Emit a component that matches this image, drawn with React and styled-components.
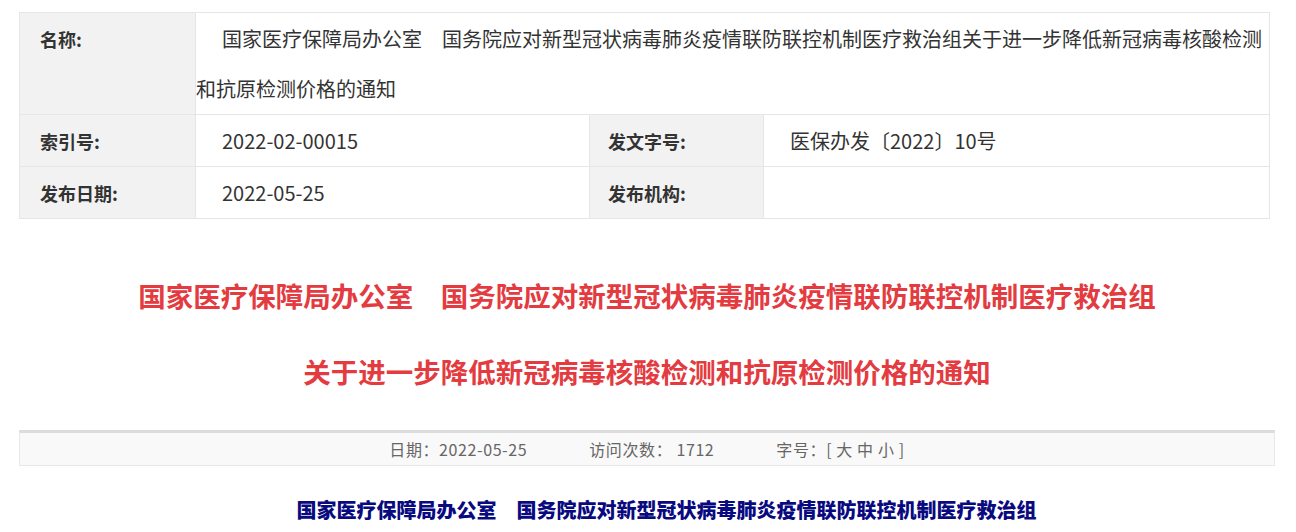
import { createGlobalStyle, styled } from "styled-components";

const GlobalStyle = createGlobalStyle`
    body {
        margin: 0;
        background: #fff;
        font-family: "Noto Sans CJK SC", "Microsoft YaHei", sans-serif;
        color: #333;
    }
`;

const meta = [
    { label: "索引号:", value: "2022-02-00015", label2: "发文字号:", value2: "医保办发〔2022〕10号" },
    { label: "发布日期:", value: "2022-05-25", label2: "发布机构:", value2: "" },
];

const App = () => {
    return (
        <Page>
            <GlobalStyle />

            <InfoTable>
                <colgroup>
                    <col style={{ width: 176 }} />
                    <col style={{ width: 394 }} />
                    <col style={{ width: 174 }} />
                    <col style={{ width: 506 }} />
                </colgroup>
                <tbody>
                    <tr>
                        <LabelCell>名称:</LabelCell>
                        <ValueCell colSpan={3}>
                            国家医疗保障局办公室　国务院应对新型冠状病毒肺炎疫情联防联控机制医疗救治组关于进一步降低新冠病毒核酸检测和抗原检测价格的通知
                        </ValueCell>
                    </tr>
                    {meta.map((row) => (
                        <tr key={row.label}>
                            <LabelCell>{row.label}</LabelCell>
                            <ValueCell>{row.value}</ValueCell>
                            <LabelCell $narrow>{row.label2}</LabelCell>
                            <ValueCell>{row.value2}</ValueCell>
                        </tr>
                    ))}
                </tbody>
            </InfoTable>

            <Title>
                <TitleLine>国家医疗保障局办公室　国务院应对新型冠状病毒肺炎疫情联防联控机制医疗救治组</TitleLine>
                <TitleLine>关于进一步降低新冠病毒核酸检测和抗原检测价格的通知</TitleLine>
            </Title>

            <InfoBar>
                <InfoItem>日期：2022-05-25</InfoItem>
                <InfoItem>访问次数： 1712</InfoItem>
                <InfoItem>字号：[ 大 中 小 ]</InfoItem>
            </InfoBar>

            <Issuer>国家医疗保障局办公室　国务院应对新型冠状病毒肺炎疫情联防联控机制医疗救治组</Issuer>
        </Page>
    );
};

const Page = styled.div`
    padding: 12px 21px 0 19px;
    width: 1256px;
`;

const InfoTable = styled.table`
    width: 1250px;
    table-layout: fixed;
    border-collapse: collapse;
    border: 1px solid #e6e6e6;
`;

const LabelCell = styled.td`
    background: #f2f2f2;
    border: 1px solid #e6e6e6;
    padding: 1px 0 0 ${(p) => (p.$narrow ? "18px" : "20px")};
    font-size: 18px;
    font-weight: 700;
    line-height: 50px;
    color: #333;
    vertical-align: top;
`;

const ValueCell = styled.td`
    background: #fff;
    border: 1px solid #e6e6e6;
    padding: 1px 0 0;
    text-indent: 26px;
    font-size: 20px;
    line-height: 50px;
    color: #333;
    vertical-align: top;
`;

const Title = styled.div`
    margin: 38px 0 21px;
    text-align: center;
    font-size: 27.5px;
    font-weight: 700;
    line-height: 76px;
    color: #e33b3f;
`;

const TitleLine = styled.div``;

const InfoBar = styled.div`
    display: flex;
    justify-content: center;
    gap: 62px;
    background: #f9f9f9;
    border: 1px solid #e8e8e8;
    border-top: 3px solid #dcdcdc;
    height: 32px;
    line-height: 32px;
    font-size: 16px;
    letter-spacing: 0.6px;
    color: #666;
`;

const InfoItem = styled.span``;

const Issuer = styled.div`
    margin-top: 24px;
    padding-left: 39px;
    text-align: center;
    font-size: 20px;
    font-weight: 900;
    line-height: 40px;
    color: #0a0a80;
`;

export default App;
